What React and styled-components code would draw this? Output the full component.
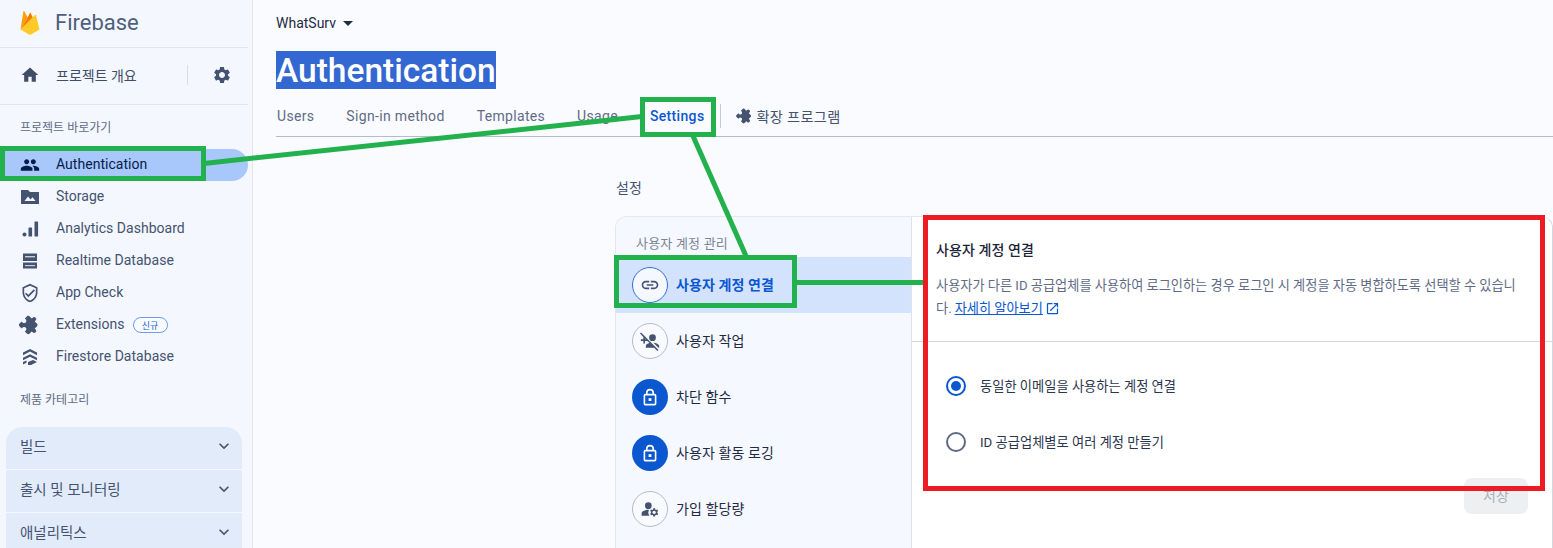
import React from 'react';
import styled, { createGlobalStyle, css } from 'styled-components';
import {
  MdHome, MdSettings, MdPeople, MdExtension, MdExpandMore,
  MdArrowDropDown, MdLink, MdPersonAddDisabled, MdManageAccounts, MdOpenInNew, MdOutlineVerifiedUser,
} from 'react-icons/md';

const FONT = `Roboto, "Noto Sans CJK KR", sans-serif`;

const Global = createGlobalStyle`
  html, body { margin: 0; padding: 0; height: 548px; overflow: hidden; background: #fafbff; }
  body { font-family: ${FONT}; }
  * { box-sizing: border-box; }
`;

const Page = styled.div`
  position: relative;
  display: flex;
  width: 1553px;
  height: 548px;
  overflow: hidden;
`;

const Sidebar = styled.aside`
  flex: 0 0 253px;
  height: 548px;
  padding-right: 4px;
  background: #f4f7fe;
  border-right: 1px solid #e1e5ee;
  overflow: hidden;
`;

const Brand = styled.div`
  height: 48px;
  display: flex;
  align-items: center;
  padding-left: 20px;
  gap: 15px;
  border-bottom: 1px solid #e1e5ee;
  font-size: 22px;
  color: #4f5f7c;
  padding-bottom: 2px;
`;

const Overview = styled.div`
  height: 57px;
  display: flex;
  align-items: center;
  padding: 0 0 2px 20px;
  border-bottom: 1px solid #e1e5ee;
  font-size: 14px;
  color: #3f4d69;
`;

const OverviewLabel = styled.span`
  flex: 1;
`;

const OverviewDivider = styled.span`
  width: 1px;
  height: 20px;
  background: #d8dde8;
  margin-right: 24px;
`;

const SettingsGear = styled.span`
  display: flex;
  margin-right: 16px;
  color: #44536f;
`;

const SectionLabel = styled.div`
  height: 12px;
  line-height: 12px;
  margin: ${p => p.$m};
  padding-left: 20px;
  font-size: 12px;
  color: #5f6b85;
`;

const NavList = styled.nav`
  display: flex;
  flex-direction: column;
`;

const NavItem = styled.div`
  height: 32px;
  display: flex;
  align-items: center;
  padding-left: 20px;
  font-size: 14px;
  letter-spacing: 0.03px;
  color: ${p => (p.$active ? '#041e49' : '#44536f')};
  background: ${p => (p.$active ? '#a8c7fa' : 'transparent')};
  border-radius: 0 16px 16px 0;
`;

const NavLabel = styled.span`
  padding-bottom: 2px;
`;

const NavIcon = styled.span`
  width: 20px;
  height: 20px;
  display: flex;
  align-items: center;
  justify-content: center;
  margin-right: 16px;
  font-size: 20px;
  flex: none;
`;

const PuzzleIcon = styled(MdExtension)`
  transform: rotate(45deg);
`;

const NewBadge = styled.span`
  margin-left: 8px;
  width: 35px;
  height: 16px;
  display: flex;
  align-items: center;
  justify-content: center;
  border: 1px solid #6d9bf1;
  border-radius: 8px;
  font-size: 9px;
  color: #1a66d6;
  background: #fafbff;
`;

const Accordion = styled.div`
  margin: 21px 6px 0 6px;
  border-radius: 16px 16px 0 0;
  overflow: hidden;
  display: flex;
  flex-direction: column;
  gap: 1px;
`;

const AccordionRow = styled.div`
  height: 42px;
  flex: none;
  display: flex;
  align-items: center;
  justify-content: space-between;
  padding: 0 8px 5px 14px;
  background: #e2ebfa;
  font-size: 14.5px;
  color: #44536f;
`;

const Main = styled.main`
  flex: 1;
  min-width: 0;
  height: 548px;
  padding-left: 23px;
  background: #fafbff;
  display: flex;
  flex-direction: column;
`;

const ProjectPicker = styled.div`
  height: 45px;
  display: flex;
  align-items: center;
  font-size: 14px;
  color: #1f2a44;
`;

const Title = styled.h1`
  margin: 6px 0 0;
  height: 38px;
  display: flex;
  font-size: 33.5px;
  line-height: 39px;
  font-weight: 500;
  color: #fff;
`;

const TitleMark = styled.span`
  background: #3367d1;
  width: 220px;
  height: 38px;
  white-space: nowrap;
`;

const Tabs = styled.div`
  margin-top: 7px;
  height: 41px;
  display: flex;
  align-items: center;
  border-bottom: 1px solid #b4bbc9;
  font-size: 14px;
  letter-spacing: 0.33px;
`;

const Tab = styled.span`
  color: ${p => (p.$active ? '#0b57d0' : '#5f6b85')};
  font-weight: ${p => (p.$active ? 500 : 400)};
  margin-left: ${p => p.$ml}px;
  white-space: nowrap;
`;

const TabDivider = styled.span`
  width: 1px;
  height: 24px;
  margin-left: 16px;
  background: #c3c9d5;
`;

const ExtTab = styled.span`
  display: flex;
  align-items: center;
  gap: 3px;
  margin-left: 16px;
  color: #44536f;
  font-size: 14.2px;
`;

const Content = styled.div`
  padding-left: 339px;
  flex: 1;
  min-height: 0;
  display: flex;
  flex-direction: column;
`;

const Heading = styled.div`
  height: 79px;
  padding: 42px 0 0 1px;
  font-size: 14px;
  line-height: 18px;
  color: #44536f;
`;

const Card = styled.section`
  flex: 1;
  display: flex;
  border: 1px solid #e4e7ef;
  border-bottom: 0;
  border-right-color: #d4d7dd;
  border-radius: 12px 12px 0 0;
  overflow: hidden;
`;

const Menu = styled.div`
  flex: 0 0 296px;
  background: #f5f8fe;
  border-right: 1px solid #dde2ec;
`;

const MenuTitle = styled.div`
  height: 40px;
  padding: 18px 0 0 20px;
  font-size: 13px;
  letter-spacing: 0.2px;
  line-height: 18px;
  color: #7c8595;
`;

const MenuRow = styled.div`
  height: 56px;
  display: flex;
  align-items: center;
  padding-left: 16px;
  gap: 8px;
  font-size: 14px;
  letter-spacing: 0.1px;
  color: ${p => (p.$active ? '#0b57d0' : '#1f2a44')};
  font-weight: ${p => (p.$active ? 700 : 400)};
  background: ${p => (p.$active ? '#d3e3fd' : 'transparent')};
`;

const MenuLabel = styled.span`
  padding-bottom: 2px;
`;

const IconCircle = styled.span`
  width: 36px;
  height: 36px;
  flex: none;
  border-radius: 50%;
  display: flex;
  align-items: center;
  justify-content: center;
  font-size: 20px;
  ${p => p.$variant === 'filled' && css`background: #0b57d0; color: #fff;`}
  ${p => p.$variant === 'active' && css`background: #f5f8fe; border: 1px solid #2f6fe0; color: #44536f;`}
  ${p => p.$variant === 'outline' && css`background: #f8fafe; border: 1px solid #b4bbc9; color: #44536f;`}
`;

const Detail = styled.div`
  flex: 1;
  min-width: 0;
  background: #fff;
  display: flex;
  flex-direction: column;
`;

const DetailHead = styled.div`
  height: 125px;
  padding: 24px 24px 0;
  border-bottom: 1px solid #d6d8dc;
`;

const DetailTitle = styled.div`
  font-size: 14px;
  letter-spacing: 0.1px;
  line-height: 18px;
  font-weight: 500;
  color: #1b2438;
`;

const DetailText = styled.p`
  margin: 15px 0 0;
  font-size: 13.2px;
  line-height: 23px;
  color: #5f6b85;
  word-break: break-all;
`;

const Link = styled.a`
  color: #0b57d0;
  text-decoration: underline;
  margin-left: 3px;
`;

const External = styled.span`
  display: inline-flex;
  vertical-align: -3px;
  margin-left: 2px;
  color: #0b57d0;
  font-size: 15px;
`;

const Options = styled.div`
  padding: 16px 0 0 34px;
  display: flex;
  flex-direction: column;
`;

const Option = styled.label`
  height: 56px;
  display: flex;
  align-items: center;
  gap: 14px;
  font-size: 13.25px;
  color: #2b364e;
`;

const OptionLabel = styled.span`
  padding-bottom: 2px;
`;

const Radio = styled.span`
  width: 20px;
  height: 20px;
  flex: none;
  border-radius: 50%;
  border: 2px solid ${p => (p.$on ? '#0b57d0' : '#5f6b85')};
  display: flex;
  align-items: center;
  justify-content: center;
  &::after {
    content: '';
    width: 10px;
    height: 10px;
    border-radius: 50%;
    background: ${p => (p.$on ? '#0b57d0' : 'transparent')};
  }
`;

const Actions = styled.div`
  display: flex;
  justify-content: flex-end;
  padding: 8px 24px 0 0;
`;

const SaveButton = styled.button`
  width: 64px;
  height: 36px;
  padding: 0 0 2px;
  border: 0;
  border-radius: 8px;
  background: #eeeff1;
  color: #a9afbd;
  font-family: ${FONT};
  font-size: 14px;
`;

const markBase = css`
  position: absolute;
  border: 5px solid #22b14c;
  pointer-events: none;
`;

const AuthMark = styled.div`
  ${markBase}
  left: 0;
  top: 146px;
  width: 206px;
  height: 35px;
`;

const SettingsMark = styled.div`
  ${markBase}
  left: 640px;
  top: 97px;
  width: 76px;
  height: 40px;
`;

const LinkMark = styled.div`
  ${markBase}
  left: 614px;
  top: 255px;
  width: 183px;
  height: 53px;
`;

const RedFrame = styled.div`
  position: absolute;
  left: 923px;
  top: 215px;
  width: 622px;
  height: 276px;
  border: 5px solid #ed1c24;
  pointer-events: none;
`;

const Lines = styled.svg`
  position: absolute;
  left: 0;
  top: 0;
  pointer-events: none;
`;

const Flame = () => (
  <svg width="20" height="26" viewBox="0 0 20 26">
    <path d="M0.5 19.5 L3.4 1.6 Q3.7 0.6 4.4 1.6 L7.6 7.6 Z" fill="#ffa000" />
    <path d="M0.5 19.5 L7.6 7.6 L9.6 11.5 Z" fill="#f57c00" />
    <path d="M7.6 7.6 L9.9 3 Q10.3 2.4 10.7 3 L13 8 L9.8 14 Z" fill="#f57c00" />
    <path d="M0.5 19.5 L15.2 4.8 Q15.8 4.5 16 5.2 L19.5 19.5 L11 24.6 Q10 25.1 9 24.6 Z" fill="#ffca28" />
  </svg>
);

const StorageIcon = () => (
  <svg width="20" height="20" viewBox="0 0 20 20" fill="currentColor">
    <path d="M1 3 H8 L10 5 H19 V17 H1 Z" />
    <path d="M4.5 14 L8 9.5 L10.5 12.5 L12.5 10.3 L15.5 14 Z" fill="#f4f7fe" />
  </svg>
);

const BarsIcon = () => (
  <svg width="20" height="20" viewBox="0 0 20 20" fill="currentColor">
    <circle cx="4.5" cy="15.5" r="2" />
    <rect x="8.5" y="8.5" width="3.6" height="9" rx="0.6" />
    <rect x="14.5" y="2.5" width="3.6" height="15" rx="0.6" />
  </svg>
);

const DatabaseIcon = () => (
  <svg width="20" height="20" viewBox="0 0 20 20" fill="currentColor">
    <path d="M3 2.5 H17 V10 H3 Z" />
    <path d="M3 11.5 H17 V17.5 H3 Z" />
    <rect x="5" y="5" width="10" height="1.4" fill="#f4f7fe" opacity="0.75" />
    <rect x="5" y="14" width="10" height="1.2" fill="#f4f7fe" opacity="0.75" />
  </svg>
);

const FirestoreIcon = () => (
  <svg width="20" height="20" viewBox="0 0 20 20" fill="currentColor">
    <path d="M10 2 L17 5.6 V8.2 L10 4.6 L3 8.2 V5.6 Z" />
    <path d="M10 7.2 L17 10.8 V13.2 L10 9.8 L3 13.2 V10.8 Z" />
    <path d="M3 15 L6.5 13.4 V15.8 L3 17.4 Z" />
    <path d="M8 15 L13 13 L17 15 L11 18 H8 Z" />
  </svg>
);

const LockIcon = () => (
  <svg width="20" height="20" viewBox="0 0 20 20" fill="none">
    <path d="M6.8 8 V5.8 a3.2 3.2 0 0 1 6.4 0 V8" stroke="#fff" strokeWidth="1.6" />
    <rect x="4.4" y="7.6" width="11.2" height="10" rx="0.8" stroke="#fff" strokeWidth="1.6" />
    <rect x="8.6" y="11.2" width="2.8" height="2.8" fill="#fff" />
  </svg>
);

const Links = () => (
  <Lines width="1553" height="548" viewBox="0 0 1553 548">
    <line x1="204" y1="163.4" x2="642" y2="116.6" stroke="#22b14c" strokeWidth="5" />
    <line x1="693" y1="136" x2="746" y2="256" stroke="#22b14c" strokeWidth="5" />
    <line x1="796" y1="282.5" x2="924" y2="282.5" stroke="#22b14c" strokeWidth="5" />
  </Lines>
);

const nav = [
  { label: 'Storage', icon: <StorageIcon /> },
  { label: 'Analytics Dashboard', icon: <BarsIcon /> },
  { label: 'Realtime Database', icon: <DatabaseIcon /> },
  { label: 'App Check', icon: <MdOutlineVerifiedUser /> },
  { label: 'Extensions', icon: <PuzzleIcon />, badge: '신규' },
  { label: 'Firestore Database', icon: <FirestoreIcon /> },
];

const menu = [
  { label: '사용자 계정 연결', icon: <MdLink />, variant: 'active', active: true },
  { label: '사용자 작업', icon: <MdPersonAddDisabled />, variant: 'outline' },
  { label: '차단 함수', icon: <LockIcon />, variant: 'filled' },
  { label: '사용자 활동 로깅', icon: <LockIcon />, variant: 'filled' },
  { label: '가입 할당량', icon: <MdManageAccounts />, variant: 'outline' },
];

export default function App() {
  return (
    <Page>
      <Global />
      <Sidebar>
        <Brand><Flame />Firebase</Brand>
        <Overview>
          <NavIcon><MdHome /></NavIcon>
          <OverviewLabel>프로젝트 개요</OverviewLabel>
          <OverviewDivider />
          <SettingsGear><MdSettings size={20} /></SettingsGear>
        </Overview>
        <SectionLabel $m="17px 0 15px">프로젝트 바로가기</SectionLabel>
        <NavList>
          <NavItem $active><NavIcon><MdPeople /></NavIcon><NavLabel>Authentication</NavLabel></NavItem>
          {nav.map(n => (
            <NavItem key={n.label}>
              <NavIcon>{n.icon}</NavIcon><NavLabel>{n.label}</NavLabel>
              {n.badge && <NewBadge>{n.badge}</NewBadge>}
            </NavItem>
          ))}
        </NavList>
        <SectionLabel $m="21px 0 0">제품 카테고리</SectionLabel>
        <Accordion>
          {['빌드', '출시 및 모니터링', '애널리틱스'].map(t => (
            <AccordionRow key={t}>{t}<MdExpandMore size={20} /></AccordionRow>
          ))}
        </Accordion>
      </Sidebar>
      <Main>
        <ProjectPicker>WhatSurv<MdArrowDropDown size={24} /></ProjectPicker>
        <Title><TitleMark>Authentication</TitleMark></Title>
        <Tabs>
          <Tab $ml={1}>Users</Tab>
          <Tab $ml={32}>Sign-in method</Tab>
          <Tab $ml={32}>Templates</Tab>
          <Tab $ml={32}>Usage</Tab>
          <Tab $ml={32} $active>Settings</Tab>
          <TabDivider />
          <ExtTab><PuzzleIcon size={16} />확장 프로그램</ExtTab>
        </Tabs>
        <Content>
          <Heading>설정</Heading>
          <Card>
            <Menu>
              <MenuTitle>사용자 계정 관리</MenuTitle>
              {menu.map(m => (
                <MenuRow key={m.label} $active={m.active}>
                  <IconCircle $variant={m.variant}>{m.icon}</IconCircle>
                  <MenuLabel>{m.label}</MenuLabel>
                </MenuRow>
              ))}
            </Menu>
            <Detail>
              <DetailHead>
                <DetailTitle>사용자 계정 연결</DetailTitle>
                <DetailText>
                  사용자가 다른 ID 공급업체를 사용하여 로그인하는 경우 로그인 시 계정을 자동 병합하도록 선택할 수 있습니다.
                  <Link>자세히 알아보기</Link>
                  <External><MdOpenInNew /></External>
                </DetailText>
              </DetailHead>
              <Options>
                <Option><Radio $on /><OptionLabel>동일한 이메일을 사용하는 계정 연결</OptionLabel></Option>
                <Option><Radio /><OptionLabel>ID 공급업체별로 여러 계정 만들기</OptionLabel></Option>
              </Options>
              <Actions><SaveButton>저장</SaveButton></Actions>
            </Detail>
          </Card>
        </Content>
      </Main>
      <Links />
      <AuthMark />
      <SettingsMark />
      <LinkMark />
      <RedFrame />
    </Page>
  );
}
